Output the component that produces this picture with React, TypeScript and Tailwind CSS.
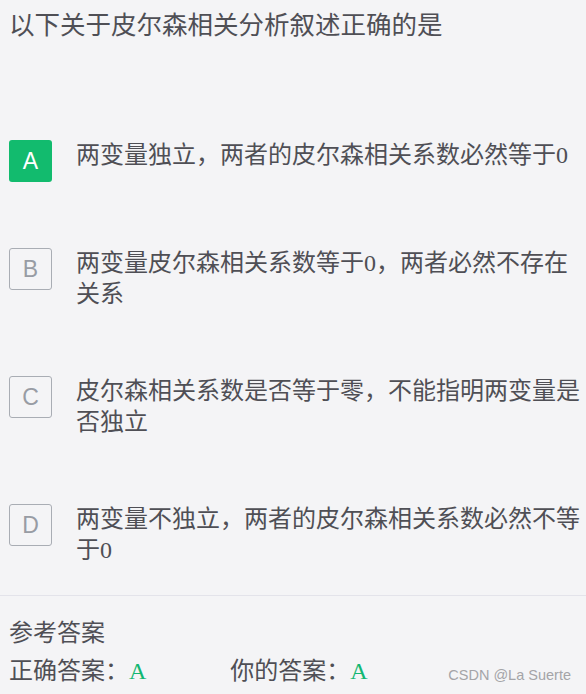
import React from 'react'

const options = [
  { key: 'A', text: '两变量独立，两者的皮尔森相关系数必然等于0', selected: true },
  { key: 'B', text: '两变量皮尔森相关系数等于0，两者必然不存在关系', selected: false },
  { key: 'C', text: '皮尔森相关系数是否等于零，不能指明两变量是否独立', selected: false },
  { key: 'D', text: '两变量不独立，两者的皮尔森相关系数必然不等于0', selected: false },
]

const cjk = { fontFamily: '"Liberation Serif", "Noto Sans CJK SC", sans-serif' }

export default function App() {
  return (
    <div className="relative w-[586px] h-[694px] overflow-hidden bg-[#f4f4f6] text-[#4f4f55]" style={cjk}>
      {/* 题目 */}
      <div className="pl-[9px] pt-[8px] text-[25.5px] leading-[36px]">以下关于皮尔森相关分析叙述正确的是</div>

      {/* 选项 */}
      <div className="mt-[96px] flex flex-col gap-[66px] pl-[9px] pr-[4px]">
        {options.map((o) => (
          <div key={o.key} className="flex items-start">
            <div
              className={
                o.selected
                  ? 'w-[43px] h-[42px] shrink-0 rounded-[3px] bg-[#12bb6e] text-white flex items-center justify-center text-[23px]'
                  : 'w-[43px] h-[42px] shrink-0 rounded-[3px] border border-[#a9adb4] text-[#989ca4] flex items-center justify-center text-[23px]'
              }
              style={{ fontFamily: '"Liberation Sans", Arial, sans-serif' }}
            >
              {o.key}
            </div>
            <div className="ml-[24px] text-[24px] leading-[31px]">{o.text}</div>
          </div>
        ))}
      </div>

      {/* 参考答案 */}
      <div className="absolute left-0 right-0 top-[595px] border-t-[1.5px] border-[#e3e3ea] pl-[9px] pt-[18px]">
        <div className="text-[24px] leading-[38px]">参考答案</div>
        <div className="flex text-[24px] leading-[38px]">
          <span>
            正确答案：<span className="text-[#13b772]">A</span>
          </span>
          <span className="ml-[84px]">
            你的答案：<span className="text-[#13b772]">A</span>
          </span>
        </div>
      </div>

      <div
        className="absolute right-[15px] bottom-[7px] text-[14.5px] text-[#a4a4a8]"
        style={{ fontFamily: '"Liberation Sans", Arial, sans-serif' }}
      >
        CSDN @La Suerte
      </div>
    </div>
  )
}
